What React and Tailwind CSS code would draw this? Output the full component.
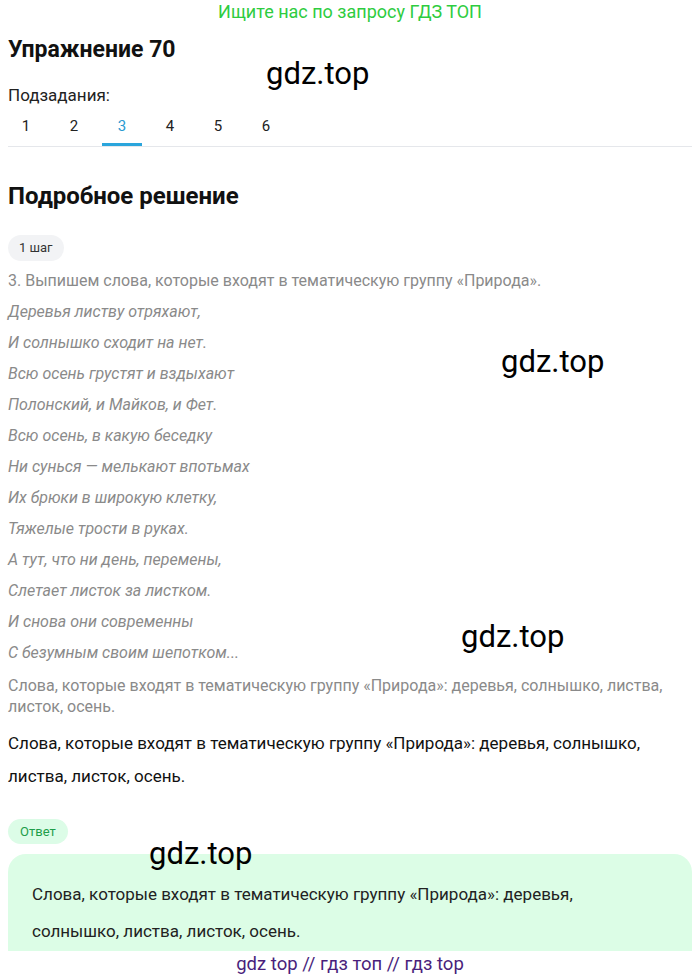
const poem = [
  'Деревья листву отряхают,',
  'И солнышко сходит на нет.',
  'Всю осень грустят и вздыхают',
  'Полонский, и Майков, и Фет.',
  'Всю осень, в какую беседку',
  'Ни сунься — мелькают впотьмах',
  'Их брюки в широкую клетку,',
  'Тяжелые трости в руках.',
  'А тут, что ни день, перемены,',
  'Слетает листок за листком.',
  'И снова они современны',
  'С безумным своим шепотком...',
];

const tabs = ['1', '2', '3', '4', '5', '6'];

function Mark({ className }) {
  return (
    <div className={`absolute text-[31px] leading-none text-black pointer-events-none ${className}`}>
      gdz.top
    </div>
  );
}

export default function App() {
  return (
    <div className="relative w-[700px] h-[980px] bg-white overflow-hidden font-['Roboto',sans-serif]">
      <div className="text-center text-[18px] leading-[24px] text-[#2ecc40]">Ищите нас по запросу ГДЗ ТОП</div>

      <div className="px-2">
        <h1 className="mt-[12px] text-[23px] leading-[28px] font-bold text-[#111]">Упражнение 70</h1>
        <div className="mt-[21px] text-[17px] leading-[20px] text-[#222]">Подзадания:</div>

        {/* tabs */}
        <div className="mt-[2px] flex gap-[8px] border-b border-[#e5e7eb]">
          {tabs.map((t, i) => (
            <div
              key={t}
              className={`w-[40px] h-[39px] flex items-center justify-center text-[15px] ${i === 0 ? 'ml-[-2px]' : ''} ${
                t === '3' ? 'text-[#2b9ad1] border-b-[3px] border-[#2aa5dc] mb-[-1px] pt-[3px]' : 'text-[#222]'
              }`}
            >
              {t}
            </div>
          ))}
        </div>

        <h2 className="mt-[34px] text-[24px] leading-[30px] font-bold text-[#111]">Подробное решение</h2>

        <div className="mt-[24px] inline-block rounded-full bg-[#f2f3f5] px-[11px] h-[26px] leading-[26px] text-[13px] text-[#333]">
          1 шаг
        </div>

        <div className="mt-[4px] text-[16px] text-[#8a8a8a]">
          <p className="leading-[31px]">3. Выпишем слова, которые входят в тематическую группу «Природа».</p>
          {poem.map((l) => (
            <p key={l} className="leading-[31px] italic">{l}</p>
          ))}
          <p className="mt-[7px] leading-[21px]">
            Слова, которые входят в тематическую группу «Природа»: деревья, солнышко, листва, листок, осень.
          </p>
        </div>

        <p className="mt-[10px] text-[17px] leading-[33px] text-[#111]">
          Слова, которые входят в тематическую группу «Природа»: деревья, солнышко, листва, листок, осень.
        </p>

        <div className="mt-[26px] inline-block rounded-full bg-[#dcfce7] px-[12px] h-[25px] leading-[25px] text-[13px] text-[#1e9e4a]">
          Ответ
        </div>

        <div className="mt-[10px] rounded-t-[18px] bg-[#dcfde6] pl-[24px] pr-[60px] pt-[22px] h-[97px]">
          <p className="text-[17px] leading-[37px] text-[#222]">
            Слова, которые входят в тематическую группу «Природа»: деревья, солнышко, листва, листок, осень.
          </p>
        </div>
      </div>

      <div className="text-center text-[18.5px] leading-[26px] text-[#4a1f7c]">gdz top // гдз топ // гдз top</div>

      <Mark className="left-[266px] top-[58px]" />
      <Mark className="left-[501px] top-[346px]" />
      <Mark className="left-[461px] top-[621px]" />
      <Mark className="left-[149px] top-[838px]" />
    </div>
  );
}
